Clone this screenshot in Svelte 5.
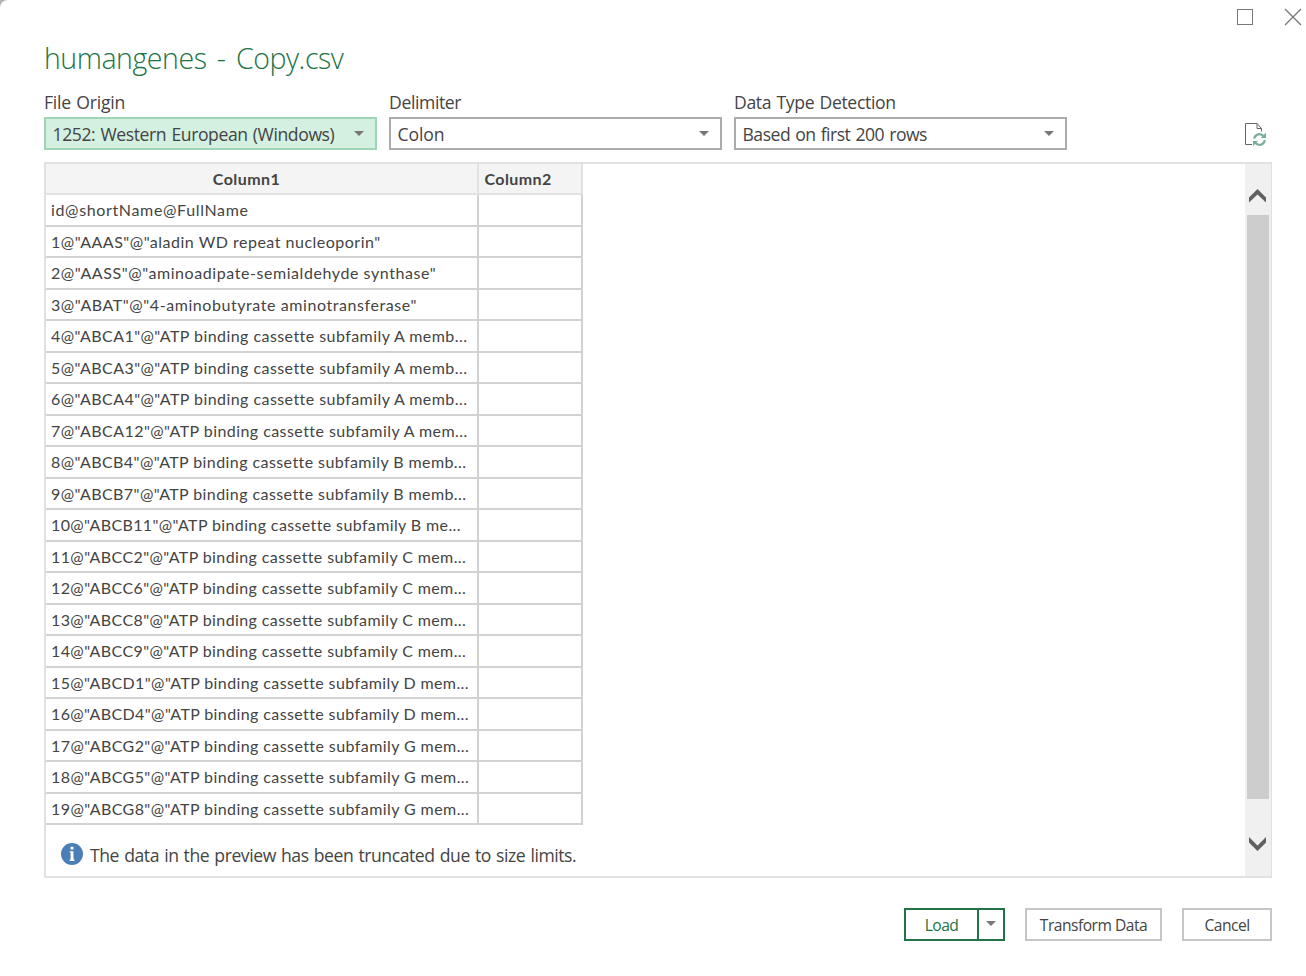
<script>
  const filters = [
    { label: 'File Origin', labelTrack: -0.22, value: '1252: Western European (Windows)', track: -0.41, active: true },
    { label: 'Delimiter', labelTrack: -0.38, value: 'Colon', track: -0.1 },
    { label: 'Data Type Detection', labelTrack: -0.34, value: 'Based on first 200 rows', track: -0.5 }
  ];
  const rows = [
    { text: 'id@shortName@FullName', track: 0.65 },
    { text: '1@"AAAS"@"aladin WD repeat nucleoporin"', track: 0.5 },
    { text: '2@"AASS"@"aminoadipate-semialdehyde synthase"', track: 0.57 },
    { text: '3@"ABAT"@"4-aminobutyrate aminotransferase"', track: 0.57 },
    { text: '4@"ABCA1"@"ATP binding cassette subfamily A memb...' },
    { text: '5@"ABCA3"@"ATP binding cassette subfamily A memb...' },
    { text: '6@"ABCA4"@"ATP binding cassette subfamily A memb...' },
    { text: '7@"ABCA12"@"ATP binding cassette subfamily A mem...' },
    { text: '8@"ABCB4"@"ATP binding cassette subfamily B memb...', track: 0.42 },
    { text: '9@"ABCB7"@"ATP binding cassette subfamily B memb...', track: 0.42 },
    { text: '10@"ABCB11"@"ATP binding cassette subfamily B me...', track: 0.38 },
    { text: '11@"ABCC2"@"ATP binding cassette subfamily C mem...', track: 0.4 },
    { text: '12@"ABCC6"@"ATP binding cassette subfamily C mem...', track: 0.4 },
    { text: '13@"ABCC8"@"ATP binding cassette subfamily C mem...', track: 0.4 },
    { text: '14@"ABCC9"@"ATP binding cassette subfamily C mem...', track: 0.4 },
    { text: '15@"ABCD1"@"ATP binding cassette subfamily D mem...', track: 0.39 },
    { text: '16@"ABCD4"@"ATP binding cassette subfamily D mem...', track: 0.39 },
    { text: '17@"ABCG2"@"ATP binding cassette subfamily G mem...', track: 0.42 },
    { text: '18@"ABCG5"@"ATP binding cassette subfamily G mem...', track: 0.42 },
    { text: '19@"ABCG8"@"ATP binding cassette subfamily G mem...', track: 0.42 }
  ];
</script>

<main class="dialog">
  <div class="window-controls">
    <svg width="16" height="16" viewBox="0 0 16 16"><rect x=".5" y=".5" width="15" height="15" /></svg>
    <svg width="18" height="18" viewBox="0 0 18 18"><path d="M1 1 17 17M17 1 1 17" /></svg>
  </div>
  <h1>humangenes - Copy.csv</h1>
  <div class="filters">
    {#each filters as f}
      <div class="field">
        <span class="label" style="letter-spacing: {f.labelTrack}px">{f.label}</span>
        <div class="select" class:active={f.active}>
          <span class="value" style="letter-spacing: {f.track}px">{f.value}</span><i class="caret"></i>
        </div>
      </div>
    {/each}
    <svg class="refresh" width="23" height="24" viewBox="0 0 23 24">
      <path class="page" d="M8 21.500H1.500V.5H13L17.500 5.500V8.500M13 .5V5.500H17.500" />
      <path class="arrows" d="M10.200 15.600A5.300 5.300 0 0 1 19.800 13.500M20.800 17.200A5.300 5.300 0 0 1 11.200 19.600" />
      <path class="heads" d="M22 9.700V15H16.600ZM9 23V17.900H14.200Z" />
    </svg>
  </div>
  <section class="preview">
    <div class="content">
      <div class="table">
        <div class="row head"><div class="c1">Column1</div><div class="c2">Column2</div></div>
        {#each rows as row}
          <div class="row"><div class="c1" style="letter-spacing: {row.track ?? 0.44}px">{row.text}</div><div class="c2"></div></div>
        {/each}
      </div>
      <div class="notice">
        <svg width="22" height="22" viewBox="0 0 22 22"><circle cx="11" cy="11" r="11" fill="#4a7eb6" /><path d="M9.500 3.800h3v2.700h-3zM8.700 8.200h3.800v8.400h.9v1.400H8.700v-1.400h.9V9.600h-.9z" fill="#fff" /></svg>
        <span>The data in the preview has been truncated due to size limits.</span>
      </div>
    </div>
    <div class="scrollbar">
      <svg width="18" height="14" viewBox="0 0 18 14"><path d="M0 13.500V8.500L8.500 0 17 8.500v5L8.500 5.500z" /></svg>
      <div class="thumb"></div>
      <svg width="18" height="14" viewBox="0 0 18 14"><path d="M0 0v5.500L8.500 14 17 5.500V0L8.500 8.500z" /></svg>
    </div>
  </section>
  <footer>
    <div class="split"><button>Load</button><button aria-label="Load options"><i class="caret"></i></button></div>
    <button class="transform">Transform Data</button>
    <button class="cancel">Cancel</button>
  </footer>
</main>

<style>
  :global(body) { background: #b4b4b4; }
  .dialog { box-sizing: border-box; width: 1306px; height: 976px; padding: 8px 4px 0 44px; font: 17.6px/24px 'Open Sans', sans-serif; word-spacing: 1px; color: #444; background: #fff; overflow: hidden; border-top-left-radius: 8px; }
  .window-controls { display: flex; justify-content: flex-end; gap: 31px; height: 18px; }
  .window-controls svg { fill: none; stroke: #777; stroke-width: 1; margin-top: 1px; }
  .window-controls svg + svg { margin-top: 0; stroke-width: 1.3; }
  h1 { margin: 12px 0 0; font-size: 28.5px; font-weight: 300; line-height: 40px; letter-spacing: -0.45px; word-spacing: 3.4px; color: #217346; white-space: nowrap; }
  .filters { display: flex; gap: 12px; margin-top: 12px; height: 60px; width: 1228px; }
  .field { width: 333px; }
  .label { display: block; height: 27px; white-space: nowrap; }
  .select { box-sizing: border-box; display: flex; align-items: center; justify-content: space-between; height: 33px; border: 2px solid #ababab; padding: 0 11px 0 6.5px; }
  .value { white-space: nowrap; padding-top: 1px; }
  .active { background: #d3f0e0; border-color: #9fd5b7; }
  .caret { width: 0; height: 0; border: 5px solid transparent; border-top-color: #777; border-bottom: 0; }
  .refresh { margin: 33px 5px 0 auto; fill: none; stroke: #666; stroke-width: 1; }
  .arrows { stroke: #7bae99; stroke-width: 2.2; }
  .heads { fill: #7bae99; stroke: none; }
  .preview { box-sizing: border-box; display: flex; justify-content: space-between; margin-top: 12px; width: 1228px; height: 716px; border: 2px solid #e1e1e1; border-right-width: 1px; }
  .table { width: 537px; font: 16px/30px Lato, sans-serif; word-spacing: 0; letter-spacing: 0.42px; }
  .row { display: flex; height: 31px; }
  .row:nth-child(even) { height: 32px; }
  .c1, .c2 { box-sizing: border-box; border: solid #d2d2d2; border-width: 0 2px 2px 0; white-space: nowrap; }
  .c1 { width: 433px; padding-left: 5px; }
  .c2 { width: 104px; padding-left: 5.5px; }
  .head .c1, .head .c2 { background: #f4f4f4; border-color: #e1e1e1; font-weight: 700; }
  .head .c1 { text-align: center; padding: 0 30px 0 0; }
  .notice { display: flex; align-items: center; gap: 7px; margin: 18px 0 0 15px; letter-spacing: -0.44px; }
  .notice svg { margin-top: -2px; }
  .scrollbar { box-sizing: border-box; width: 26px; background: #f0f0f0; padding-top: 25px; display: flex; flex-direction: column; align-items: center; }
  .scrollbar svg { fill: #606060; }
  .thumb { width: 22px; height: 584px; background: #cdcdcd; margin: 12px 0 38px; }
  footer { display: flex; justify-content: flex-end; gap: 20px; width: 1228px; margin-top: 30px; }
  button { box-sizing: border-box; height: 33px; border: 2px solid #c6c6c6; background: #fff; padding: 2px 0 0; font: 15.6px/27px 'Open Sans', sans-serif; letter-spacing: -0.5px; color: #444; }
  .split { display: flex; }
  .split button { width: 75px; border-color: #217346; color: #217346; }
  .split button + button { width: 28px; margin-left: -2px; display: flex; justify-content: center; padding-top: 11px; }
  .transform { width: 137px; }
  .cancel { width: 90px; }
</style>
